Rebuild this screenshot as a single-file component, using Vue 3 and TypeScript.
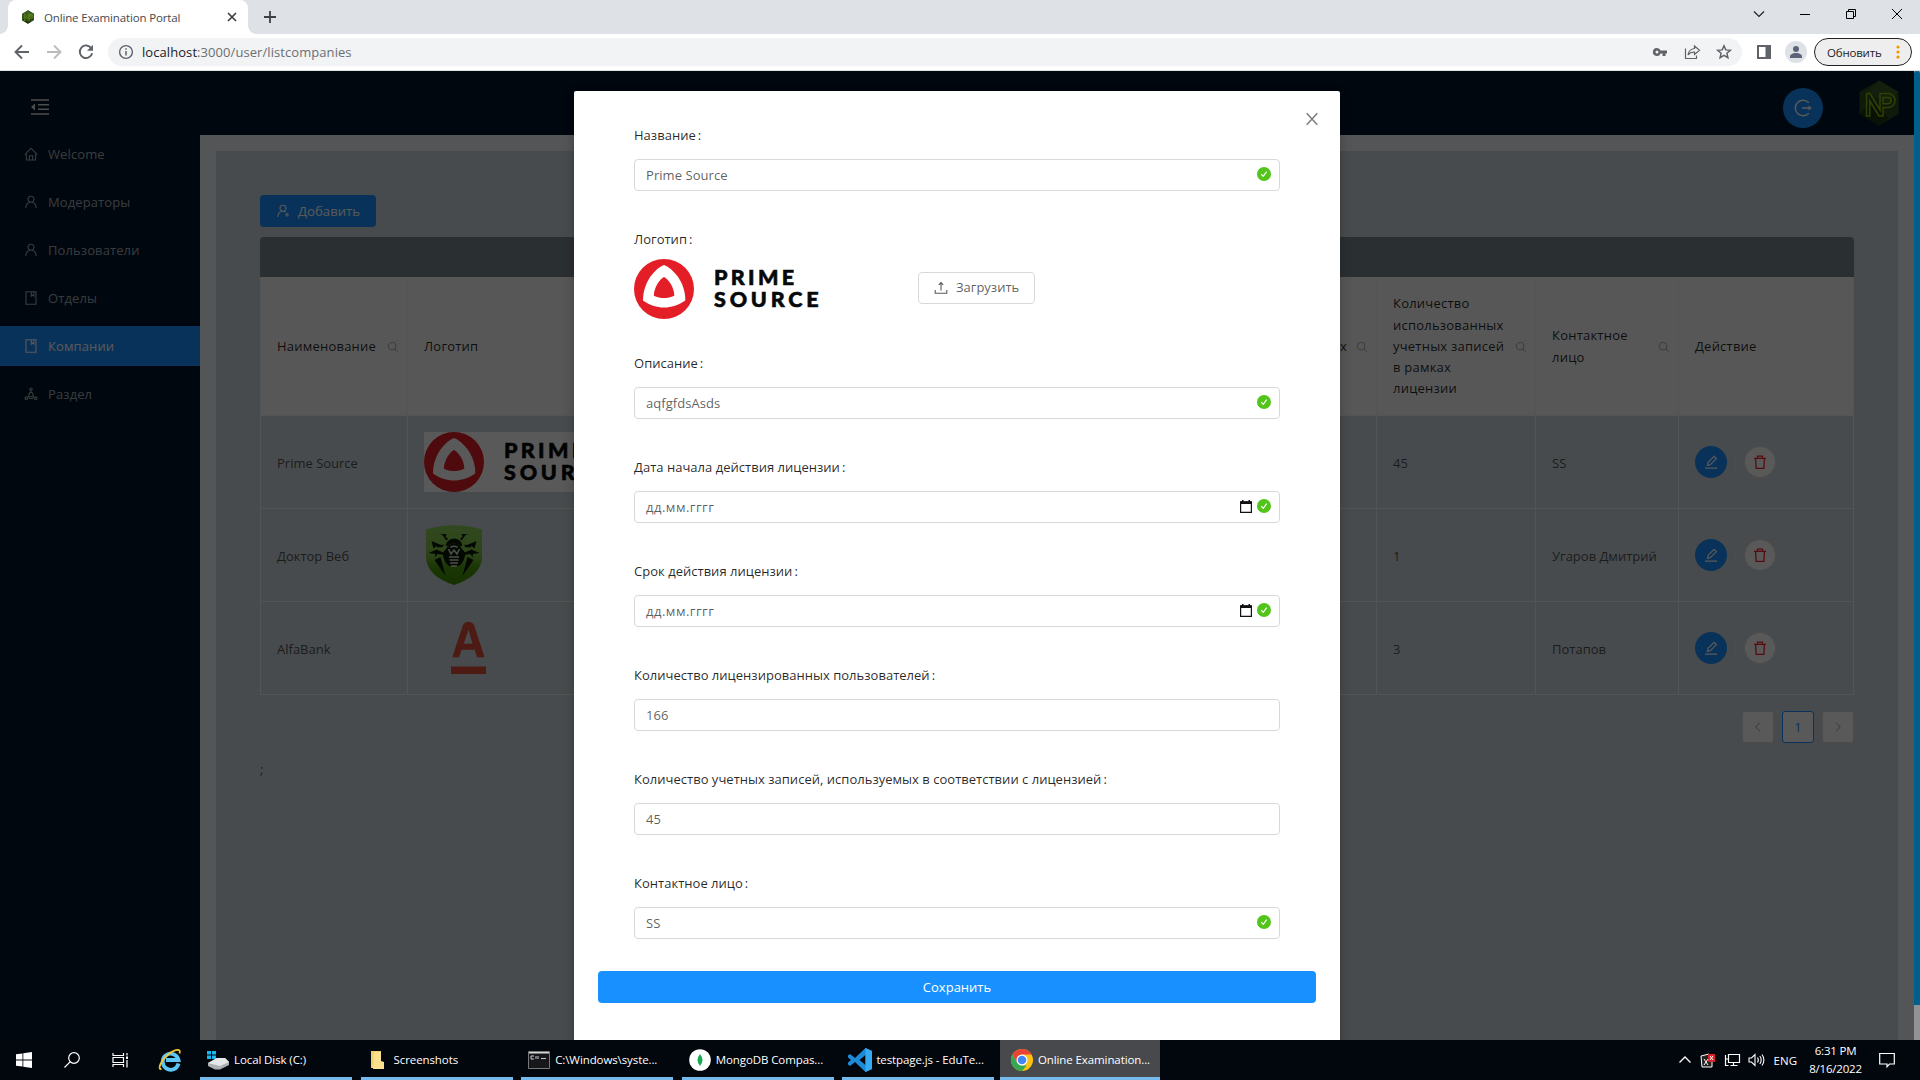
<script setup lang="ts">
import { h } from 'vue'

interface MenuItem { label: string; icon: string; active?: boolean }
interface Company { name: string; logo: string; used: string; contact: string }
interface Field { label: string; value?: string; ok?: boolean; date?: boolean; logo?: boolean }
interface Task { label: string; icon: string; active?: boolean }

const PrimeLogo = () =>
  h('svg', { width: 190, height: 60, viewBox: '0 0 190 60' }, [
    h('circle', { cx: 30, cy: 30, r: 30, fill: '#e31e26' }),
    h('path', { d: 'M30 6C38 9 51.5 22 51.3 41.5C45 46 37 48.5 30 48.5S15 46 9 41.5C9 22 22 9 30 6Z', fill: '#fff' }),
    h('path', { d: 'M30 18C34 20 40.3 28 40.3 36.7C37 38.5 33 39 30 39S23 38.5 19.8 36.7C20 28 26 20 30 18Z', fill: '#e31e26' }),
    h('g', { fill: '#060809', stroke: '#060809', 'stroke-width': 0.6, 'font-family': 'Lato, "Open Sans", sans-serif', 'font-weight': 900, 'font-size': 21.5 }, [
      h('text', { x: 80, y: 26, textLength: 80, lengthAdjust: 'spacing' }, 'PRIME'),
      h('text', { x: 80, y: 48.2, textLength: 104.5, lengthAdjust: 'spacing' }, 'SOURCE'),
    ]),
  ])

const icons: Record<string, string> = {
  home: 'M.8 7.6L7 1.2l6.2 6.4M2.4 7v6h9.2V7M5.4 13V8.8h3.2V13',
  user: 'M7 7.2a3 3 0 1 0 0-6a3 3 0 0 0 0 6M1.8 13c.2-3.3 2.2-5.7 5.2-5.7s5 2.4 5.2 5.7',
  book: 'M2 .8h10v12.4h-10zM7.3 .8v4.3l1.3-1.1l1.3 1.1V.8',
  nodes: 'M7 3.4a1.200 1.200 0 1 0 0-2.400a1.200 1.200 0 0 0 0 2.400M2.300 12.500a1.300 1.300 0 1 0 0-2.600a1.300 1.300 0 0 0 0 2.600M11.700 12.500a1.300 1.300 0 1 0 0-2.600a1.300 1.300 0 0 0 0 2.600M7 3.400v1.800M3.500 10.700l1.500-1M10.500 10.700l-1.500-1M5 9.800C4.700 7.500 5.500 5.500 7 5.200C8.500 5.500 9.300 7.500 9 9.800zM5 11.500h4',
  userAdd: 'M7 7.2a3 3 0 1 0 0-6a3 3 0 0 0 0 6M1.8 13c.2-3.3 2.2-5.7 5.2-5.7c1 0 1.9.3 2.7.8M11 8.8v4M9 10.8h4',
  search: 'M6 10.5a4.5 4.5 0 1 0 0-9a4.5 4.5 0 0 0 0 9M9.3 9.3L13 13.2',
  edit: 'M1 13.2h12M3.5 10.3l.6-2.9l6-6l2.2 2.2l-6 6z',
  trash: 'M1 3.4h12M4.6 3.2V1.2h4.8v2M2.6 3.6l.5 9.7h7.8l.5-9.7',
  upload: 'M1.2 9v3.2h11.6V9M7 9.5V1.5M4.8 3.8L7 1.5l2.2 2.3',
  left: 'M9.3 2L4.3 7l5 5',
  right: 'M4.7 2l5 5l-5 5',
}

const menu: MenuItem[] = [
  { label: 'Welcome', icon: 'home' },
  { label: 'Модераторы', icon: 'user' },
  { label: 'Пользователи', icon: 'user' },
  { label: 'Отделы', icon: 'book' },
  { label: 'Компании', icon: 'book', active: true },
  { label: 'Раздел', icon: 'nodes' },
]

const companies: Company[] = [
  { name: 'Prime Source', logo: 'prime', used: '45', contact: 'SS' },
  { name: 'Доктор Веб', logo: 'drweb', used: '1', contact: 'Угаров Дмитрий' },
  { name: 'AlfaBank', logo: 'alfa', used: '3', contact: 'Потапов' },
]

const usedTitle = ['Количество', 'использованных', 'учетных записей', 'в рамках', 'лицензии']

const fields: Field[] = [
  { label: 'Название', value: 'Prime Source', ok: true },
  { label: 'Логотип', logo: true },
  { label: 'Описание', value: 'aqfgfdsAsds', ok: true },
  { label: 'Дата начала действия лицензии', value: 'дд.мм.гггг', date: true, ok: true },
  { label: 'Срок действия лицензии', value: 'дд.мм.гггг', date: true, ok: true },
  { label: 'Количество лицензированных пользователей', value: '166' },
  { label: 'Количество учетных записей, используемых в соответствии с лицензией', value: '45' },
  { label: 'Контактное лицо', value: 'SS', ok: true },
]

const tasks: Task[] = [
  { label: 'Local Disk (C:)', icon: 'disk' },
  { label: 'Screenshots', icon: 'folder' },
  { label: 'C:\\Windows\\syste...', icon: 'cmd' },
  { label: 'MongoDB Compas...', icon: 'mongo' },
  { label: 'testpage.js - EduTe...', icon: 'code' },
  { label: 'Online Examination...', icon: 'chrome', active: true },
]
</script>

<template>
  <svg class="defs" width="0" height="0">
    <symbol id="np" viewBox="0 0 40 46">
      <path d="M20 0.5L39.5 12V34L20 45.5L.5 34V12Z" fill="#2c4a1e" />
      <path d="M20 .5L39.5 12L28 24L8 12Z" fill="#3a5a28" />
      <path d="M.5 34L12 22L30 38L20 45.5Z" fill="#1d3512" />
      <path d="M7.5 36V13.5h3.5L21 30V13.5h8a6.5 6.5 0 0 1 0 14h-5V36h-4L10.8 21v15zM24 17.5h5a2.8 2.8 0 0 1 0 6.2h-5z" fill="none" stroke="#8cb80c" stroke-width="1.5" />
    </symbol>
  </svg>

  <div class="screen">
    <header class="tabs">
      <div class="tab">
        <svg width="14" height="14"><use href="#np" /></svg>
        <span class="tab-title">Online Examination Portal</span>
        <svg class="tab-x" width="10" height="10" viewBox="0 0 10 10"><path d="M1 1l8 8M9 1L1 9" stroke="#3c4043" stroke-width="1.7" /></svg>
      </div>
      <svg class="plus" width="12" height="12" viewBox="0 0 12 12"><path d="M6 0v12M0 6h12" stroke="#3c4043" stroke-width="1.8" /></svg>
      <div class="win">
        <svg width="12" height="12" viewBox="0 0 12 12"><path d="M1 3.5l5 5l5-5" fill="none" stroke="#222" stroke-width="1.2" /></svg>
        <svg width="12" height="12" viewBox="0 0 12 12"><path d="M1 6.5h10" stroke="#000" /></svg>
        <svg width="12" height="12" viewBox="0 0 12 12"><path d="M1.5 3.5h7v7h-7zM3.5 3.5v-2h7v7h-2" fill="none" stroke="#000" /></svg>
        <svg width="12" height="12" viewBox="0 0 12 12"><path d="M1 1l10 10M11 1L1 11" stroke="#000" /></svg>
      </div>
    </header>

    <div class="toolbar">
      <svg class="nav" width="16" height="16" viewBox="0 0 16 16"><path d="M15 8H2M8 1.5L1.5 8L8 14.5" fill="none" stroke="#5f6368" stroke-width="1.9" /></svg>
      <svg class="nav" width="16" height="16" viewBox="0 0 16 16"><path d="M1 8h13M8 1.5L14.5 8L8 14.5" fill="none" stroke="#babcbe" stroke-width="1.9" /></svg>
      <svg class="nav" width="16" height="16" viewBox="0 0 16 16"><path d="M13.3 4.2A6.3 6.3 0 1 0 14.2 9.2" fill="none" stroke="#5f6368" stroke-width="1.9" /><path d="M15 .8v6H9z" fill="#5f6368" /></svg>
      <div class="omnibox">
        <svg width="16" height="16" viewBox="0 0 16 16"><circle cx="8" cy="8" r="6.4" fill="none" stroke="#5f6368" stroke-width="1.4" /><path d="M8 7v4.5M8 4.3v1.5" stroke="#5f6368" stroke-width="1.5" /></svg>
        <span class="url"><b>localhost</b>:3000/user/listcompanies</span>
        <div class="omni-icons">
          <svg width="16" height="16" viewBox="0 0 16 16"><path d="M5 4a4 4 0 1 0 3.6 5.5H10.5V12h3V9.5H15V6.5H8.6A4 4 0 0 0 5 4zM5 6.5a1.5 1.5 0 1 1 0 3a1.5 1.5 0 0 1 0-3z" fill="#5f6368" fill-rule="evenodd" /></svg>
          <svg width="16" height="16" viewBox="0 0 16 16"><path d="M1.5 4.5v10h11v-3M10.5 2l5 4.3l-5 4.2V8C7.5 8 5.5 9 4 11C4.5 7.5 6.5 5 10.5 4.5z" fill="none" stroke="#5f6368" stroke-width="1.2" /></svg>
          <svg width="16" height="16" viewBox="0 0 16 16"><path d="M8 1.8l1.8 4.1l4.5.4l-3.4 3l1 4.4L8 11.4l-3.9 2.3l1-4.4l-3.4-3l4.5-.4z" fill="none" stroke="#5f6368" stroke-width="1.5" /></svg>
        </div>
      </div>
      <svg class="panel-icon" width="14" height="14" viewBox="0 0 14 14"><path d="M0 0h14v14H0zM2 2v10h6.5V2z" fill="#5f6368" fill-rule="evenodd" /></svg>
      <svg class="avatar" width="22" height="22" viewBox="0 0 22 22"><circle cx="11" cy="11" r="11" fill="#dee1e6" /><circle cx="11" cy="8" r="3" fill="#5a6377" /><path d="M5 17v-1.5c0-2.3 3-3.5 6-3.5s6 1.2 6 3.5V17z" fill="#5a6377" /></svg>
      <div class="update"><span>Обновить</span><svg width="4" height="14" viewBox="0 0 4 14"><g fill="#f29900"><circle cx="2" cy="2" r="1.6" /><circle cx="2" cy="7" r="1.6" /><circle cx="2" cy="12" r="1.6" /></g></svg></div>
    </div>

    <div class="viewport">
      <div class="app">
        <aside class="sider">
          <svg class="fold" width="18" height="16" viewBox="0 0 18 16"><path d="M0 1h18M7 5.7h11M7 10.3h11M0 15h18" stroke="#fff" stroke-opacity=".85" stroke-width="1.6" /><path d="M4 4.5v7L0 8z" fill="#fff" fill-opacity=".85" /></svg>
          <nav class="menu">
            <div v-for="m in menu" :key="m.label" class="menu-item" :class="{ active: m.active }">
              <svg width="14" height="14" viewBox="0 0 14 14"><path :d="icons[m.icon]" class="stroke" /></svg>
              <span>{{ m.label }}</span>
            </div>
          </nav>
        </aside>
        <div class="main">
          <div class="topbar">
            <div class="logout"><svg width="18" height="18" viewBox="0 0 18 18"><path d="M14.8 3.7A7.8 7.8 0 1 0 14.8 14.3M8 9h8" fill="none" stroke="#fff" stroke-width="1.5" /><path d="M14.5 6.5v5L17.8 9z" fill="#fff" /></svg></div>
            <svg width="40" height="46"><use href="#np" /></svg>
          </div>
          <div class="content">
            <div class="add"><svg width="14" height="14" viewBox="0 0 14 14"><path :d="icons.userAdd" class="stroke" /></svg><span>Добавить</span></div>
            <div class="table-title"></div>
            <div class="table">
              <div class="row head">
                <div class="cell c1">Наименование<svg class="find" width="12" height="12" viewBox="0 0 14 14"><path :d="icons.search" class="stroke" /></svg></div>
                <div class="cell c2">Логотип</div>
                <div class="cell c3"><span>х</span><svg class="find" width="12" height="12" viewBox="0 0 14 14"><path :d="icons.search" class="stroke" /></svg></div>
                <div class="cell c4"><div><div v-for="l in usedTitle" :key="l">{{ l }}</div></div><svg class="find" width="12" height="12" viewBox="0 0 14 14"><path :d="icons.search" class="stroke" /></svg></div>
                <div class="cell c5"><div><div>Контактное</div><div>лицо</div></div><svg class="find" width="12" height="12" viewBox="0 0 14 14"><path :d="icons.search" class="stroke" /></svg></div>
                <div class="cell c6">Действие</div>
              </div>
              <div v-for="c in companies" :key="c.name" class="row">
                <div class="cell c1"><span class="txt">{{ c.name }}</span></div>
                <div class="cell c2">
                  <div v-if="c.logo === 'prime'" class="prime-cell"><PrimeLogo /></div>
                  <svg v-else-if="c.logo === 'drweb'" width="60" height="60" viewBox="0 0 60 60">
                    <defs><linearGradient id="dw" x1="0" y1="0" x2="0" y2="1"><stop offset="0" stop-color="#8fd05a" /><stop offset=".5" stop-color="#7cc242" /><stop offset=".72" stop-color="#4a9c0c" /><stop offset="1" stop-color="#3c8c00" /></linearGradient></defs>
                    <path d="M2 4.5Q30-4 58 4.5V33Q57 51 30 60Q3 51 2 33Z" fill="url(#dw)" />
                    <g fill="#0b1808">
                      <path d="M21.5 20Q24 13.5 30 13.5T38.5 20L36.5 21.5Q34 18.5 30 18.5T23.5 21.5Z" />
                      <path d="M22 24l3-4q5-3.5 10 0l3 4l3.5 4q-1 9-6.5 13h-10q-5.500-4-6.500-13z" />
                      <path d="M22.5 15.5L18 9.5L14.5 9L22.5 9L21.5 11.5L24 14zM37.5 15.5L42 9.5L45.5 9L37.5 9L38.5 11.5L36 14z" />
                      <path d="M7.5 16l9.5 4l2.5-.5l-.5 2.5l-5.5.5l-1-1.5l-3 2.5zM52.5 16l-9.5 4l-2.5-.5l.5 2.5l5.5.5l1-1.5l3 2.5z" />
                      <path d="M4.5 28l8-3.5l8 3.5v2l-7-1l-2 3.5l-.5-3.5zM55.5 28l-8-3.5l-8 3.5v2l7-1l2 3.5l.5-3.5z" />
                      <path d="M10.500 35l6-3l5 19zM49.500 35l-6-3l-5 19z" />
                    </g>
                    <path d="M24.5 24l2.500 5l3-4l3 4l2.500-5M26.500 22.500Q30 20 33.500 22.500M25 32h10M25.500 35h9M26 38h8M27 41h6" fill="none" stroke="#d3e6c6" stroke-width="1.6" />
                  </svg>
                  <svg v-else width="60" height="60" viewBox="0 0 60 60"><g fill="#e04a3b"><path d="M28.300 39.300L38.500 8.300Q40 3.700 44.500 3.700T50.500 8.300L60.500 39.300H53L50.700 31.800H37.500L35 39.300ZM39.800 25.800H48.500L44.500 11.800Z" fill-rule="evenodd" /><path d="M27 48.500h35v7.500H27z" /></g></svg>
                </div>
                <div class="cell c3"></div>
                <div class="cell c4"><span class="txt">{{ c.used }}</span></div>
                <div class="cell c5"><span class="txt">{{ c.contact }}</span></div>
                <div class="cell c6 actions">
                  <div class="round blue"><svg width="14" height="14" viewBox="0 0 14 14"><path :d="icons.edit" class="stroke" /></svg></div>
                  <i class="divider"></i>
                  <div class="round red"><svg width="14" height="14" viewBox="0 0 14 14"><path :d="icons.trash" class="stroke" /></svg></div>
                </div>
              </div>
            </div>
            <div class="pager">
              <div class="page"><svg width="12" height="12" viewBox="0 0 14 14"><path :d="icons.left" class="stroke" /></svg></div>
              <div class="page current">1</div>
              <div class="page"><svg width="12" height="12" viewBox="0 0 14 14"><path :d="icons.right" class="stroke" /></svg></div>
            </div>
            <div class="semi">;</div>
          </div>
        </div>
      </div>
      <div class="scrollbar"><div class="thumb"></div></div>

      <div class="mask">
        <section class="modal">
          <svg class="close" width="12" height="12" viewBox="0 0 12 12"><path d="M.7 .3l10.600 11.400M11.300 .3L.7 11.700" stroke="#7c7c7c" stroke-width="1.5" /></svg>
          <div class="form">
            <div v-for="f in fields" :key="f.label" class="field" :class="{ 'logo-field': f.logo }">
              <label>{{ f.label }}<span class="colon">:</span></label>
              <div v-if="f.logo" class="logo-row">
                <PrimeLogo />
                <div class="upload"><svg width="14" height="14" viewBox="0 0 14 14"><path :d="icons.upload" class="stroke" /></svg><span>Загрузить</span></div>
              </div>
              <div v-else class="input">
                <span class="value" :class="{ date: f.date }">{{ f.value }}</span>
                <svg v-if="f.date" class="cal" width="12" height="13" viewBox="0 0 12 13"><path d="M.6 1.800h10.800v10.500H.6z" fill="none" stroke="#111" stroke-width="1.200" /><path d="M.5 1.500h11v2.600H.5zM2 0h1.500v2H2zM8.500 0H10v2H8.500z" fill="#111" /></svg>
                <svg v-if="f.ok" class="ok" width="14" height="14" viewBox="0 0 14 14"><circle cx="7" cy="7" r="7" fill="#52c41a" /><path d="M4.200 7.200l2 2.200l3.500-4.700" fill="none" stroke="#fff" stroke-width="1.200" /></svg>
              </div>
            </div>
          </div>
          <div class="save">Сохранить</div>
        </section>
      </div>
    </div>

    <footer class="taskbar">
      <div class="sys"><svg width="16" height="16" viewBox="0 0 16 16"><path d="M0 2.300L6.500 1.400V7.600H0zM7.300 1.300L16 0V7.600H7.300zM0 8.400h6.500v6.200L0 13.700zM7.300 8.400H16V16l-8.700-1.300z" fill="#fff" /></svg></div>
      <div class="sys"><svg width="16" height="16" viewBox="0 0 16 16"><circle cx="10" cy="6" r="5.300" fill="none" stroke="#fff" stroke-width="1.200" /><path d="M6.300 9.700L.5 15.500" stroke="#fff" stroke-width="1.200" /></svg></div>
      <div class="sys"><svg width="17" height="16" viewBox="0 0 17 16"><path d="M1 1v2.500h10.500V1M1 15v-2.500h10.500V15M1 5.500h10.500v5H1zM15 1v2.500M15 8v7.500" fill="none" stroke="#fff" stroke-width="1.200" /><path d="M14 4.500h2v2.500h-2z" fill="#fff" /></svg></div>
      <div class="sys ie"><svg width="24" height="24" viewBox="0 0 24 24"><path d="M20.500 15.500A8 8 0 1 1 20.500 12H8" fill="none" stroke="#5cc6f4" stroke-width="3.800" /><path d="M3.500 21C-1 22 3 12 10 6.500S23.500 0 21.500 5.500" fill="none" stroke="#f5c531" stroke-width="1.800" /></svg></div>
      <div v-for="t in tasks" :key="t.label" class="task" :class="[t.icon, { current: t.active }]">
        <div class="task-icon">
          <svg v-if="t.icon === 'disk'" width="22" height="20" viewBox="0 0 22 20"><path d="M0 1h4v3.500H0zM5 1h4v3.500H5zM0 5.500h4V9H0zM5 5.500h4V9H5z" fill="#19b5ee" /><path d="M1 13l9-5h8l4 4v3l-9 4.500H8L1 16z" fill="#aeb1b4" /><path d="M1 13l9-5h8l4 4l-9 4z" fill="#e4e6e8" /></svg>
          <svg v-else-if="t.icon === 'folder'" width="16" height="20" viewBox="0 0 16 20"><path d="M1 1h10v17H1z" fill="#f3cf71" /><path d="M4 2h7v9l3 1v7H3z" fill="#fbe08d" /></svg>
          <svg v-else-if="t.icon === 'cmd'" width="22" height="18" viewBox="0 0 22 18"><path d="M.5 .5h21v17H.5z" fill="#15171a" stroke="#777" /><path d="M1 1h20v1.500H1z" fill="#d4d6d8" /><path d="M3 5h3M3 8h3M3 5v3M8 5v3M10 5v3M13 7.500h5" stroke="#ddd" stroke-width=".9" /></svg>
          <svg v-else-if="t.icon === 'mongo'" width="22" height="22" viewBox="0 0 22 22"><circle cx="11" cy="11" r="10.800" fill="#fff" /><path d="M11 5Q16 11 11 17Q6 11 11 5z" fill="#13aa52" /></svg>
          <svg v-else-if="t.icon === 'code'" width="24" height="24" viewBox="0 0 24 24"><path d="M17.500 0L24 3v18l-6.500 3L7 14l-5 4l-2-1.500v-2L3 12L0 9.500v-2L2 6l5 4zM17.500 7L11.500 12l6 5z" fill="#1c8ad6" fill-rule="evenodd" /><path d="M17.500 0L24 3v18l-6.500 3z" fill="#35aaf2" /></svg>
          <svg v-else width="22" height="22" viewBox="0 0 22 22"><circle cx="11" cy="11" r="11" fill="#fbc116" /><path d="M1.470 5.500A11 11 0 0 1 20.530 5.500H11L6.240 13.750Z" fill="#ea4335" /><path d="M1.470 5.500L6.240 13.750L11 16.500H15.760L11 22A11 11 0 0 1 1.470 5.500Z" fill="#34a853" /><circle cx="11" cy="11" r="5.500" fill="#fff" /><circle cx="11" cy="11" r="4.300" fill="#4285f4" /></svg>
        </div>
        <span>{{ t.label }}</span>
      </div>
      <div class="tray">
        <svg width="14" height="14" viewBox="0 0 14 14"><path d="M1.500 9.500L7 4l5.500 5.500" fill="none" stroke="#fff" stroke-width="1.300" /></svg>
        <svg width="17" height="17" viewBox="0 0 17 17"><path d="M2 4l8-2l3 4v9H3z" fill="#222" stroke="#fff" /><path d="M9 2h7v8H9z" fill="#d8232a" /><path d="M11 4l3 4M14 4l-3 4M5 7l4 6M9 7l-4 6" stroke="#fff" /></svg>
        <svg width="17" height="16" viewBox="0 0 17 16"><path d="M4.500 2.500h11v8h-11zM9.500 10.500v3M6.500 13.500h7M1.500 3v4h3M1.500 7v6.500h3" fill="none" stroke="#fff" stroke-width="1.200" /></svg>
        <svg width="17" height="16" viewBox="0 0 17 16"><path d="M1 6h2.500L7 2.500v11L3.500 10H1zM9.500 5.500q1.700 2.500 0 5M11.800 4q2.800 4 0 8M14 2.500q3.800 5.500 0 11" fill="none" stroke="#fff" stroke-width="1.100" /></svg>
        <span class="lang">ENG</span>
        <div class="clock"><div>6:31 PM</div><div>8/16/2022</div></div>
        <svg width="16" height="16" viewBox="0 0 16 16"><path d="M.7 1.500h14.600v10.500H10.500L8 14.800V12H.7z" fill="none" stroke="#fff" stroke-width="1.200" /></svg>
      </div>
    </footer>
  </div>
</template>

<style>
body { margin: 0; overflow: hidden; }
</style>

<style scoped>
* { box-sizing: border-box; }
svg { flex: none; display: block; overflow: visible; }
.defs { position: absolute; }
.stroke { fill: none; stroke: currentColor; stroke-width: 1.1; }
.screen { width: 1920px; height: 1080px; display: flex; flex-direction: column; overflow: hidden; font: 13px/21px "Open Sans", "Noto Sans", sans-serif; color: rgba(0, 0, 0, .65); }
.tabs { height: 34px; background: #dee1e6; display: flex; align-items: center; padding-left: 8px; flex: none; }
.tab { position: relative; width: 240px; height: 34px; background: #fff; border-radius: 8px 8px 0 0; display: flex; align-items: center; padding: 0 11px 0 13px; color: #45494d; font-size: 11.5px; }
.tab::before, .tab::after { content: ""; position: absolute; bottom: 0; width: 8px; height: 8px; }
.tab::before { left: -8px; background: radial-gradient(circle at 0 0, #dee1e6 7.5px, #fff 8px); }
.tab::after { right: -8px; background: radial-gradient(circle at 100% 0, #dee1e6 7.5px, #fff 8px); }
.tab-title { margin-left: 9px; flex: 1; white-space: nowrap; letter-spacing: -.15px; }
.plus { margin-left: 16px; }
.win { margin-left: auto; display: flex; gap: 34px; margin-right: 17px; margin-top: -6px; }
.toolbar { height: 37px; flex: none; background: #fff; border-bottom: 1px solid #dfe3df; display: flex; align-items: center; padding: 0 8px 0 14px; }
.nav { margin-right: 16px; }
.omnibox { width: 1634px; margin-left: -2px; height: 28px; border-radius: 14px; background: #f1f3f4; display: flex; align-items: center; padding: 0 10px; color: #6b6f73; }
.url { margin-left: 8px; font-size: 13px; letter-spacing: .07px; }
.url b { font-weight: 400; color: #202124; }
.omni-icons { margin-left: auto; display: flex; gap: 16px; }
.panel-icon { margin-left: 15px; }
.avatar { margin-left: 14px; }
.update { margin-left: 7px; width: 98px; height: 28px; border: 1px solid #222; border-radius: 14px; background: #eee; display: flex; align-items: center; justify-content: space-between; padding: 0 11px 0 12px; font-size: 11.5px; letter-spacing: -.2px; color: #222; }
.viewport { position: relative; flex: none; height: 969px; display: flex; overflow: hidden; }
.app { width: 1914px; display: flex; }
.scrollbar { width: 6px; background: #8f9396; }
.thumb { height: 934px; background: #00608b; border-radius: 3px 3px 0 0; }
.sider { width: 200px; background: #001529; }
.fold { margin: 28px 0 0 31px; }
.menu { margin-top: 19px; display: flex; flex-direction: column; gap: 8px; color: rgba(255, 255, 255, .65); letter-spacing: .1px; }
.menu-item { height: 40px; display: flex; align-items: center; padding-left: 24px; gap: 10px; }
.menu-item.active { background: #1890ff; color: #fff; }
.main { flex: 1; background: #f0f2f5; }
.topbar { height: 64px; background: #001529; display: flex; justify-content: flex-end; padding: 9px 15px 0 0; gap: 36px; }
.logout { width: 40px; height: 40px; margin-top: 8px; border-radius: 50%; background: #1890ff; display: flex; align-items: center; justify-content: center; }
.content { margin: 16px 16px 0; height: 889px; background: #ced6dc; padding: 44px; }
.add { width: 116px; height: 32px; border-radius: 4px; background: #1890ff; color: #fff; display: flex; align-items: center; padding-left: 16px; gap: 8px; font-size: 13.2px; }
.table-title { margin-top: 10px; height: 40px; border-radius: 4px 4px 0 0; background: #78868f; }
.table { border-left: 1px solid #f0f0f0; }
.row { display: flex; height: 93px; border-bottom: 1px solid #f0f0f0; }
.row.head { height: 139px; background: #fafafa; color: rgba(0, 0, 0, .85); font-weight: 500; }
.cell { padding-left: 16px; border-right: 1px solid #f0f0f0; display: flex; align-items: center; white-space: nowrap; flex: none; }
.txt { padding-top: 2px; }
.head .cell { justify-content: space-between; padding-right: 8px; letter-spacing: .22px; padding-top: 1px; line-height: 21.2px; }
.c1 { width: 147px; } .c2 { width: 810px; } .c3 { width: 159px; } .c4 { width: 159px; } .c5 { width: 143px; } .c6 { width: 175px; }
.head .c3 { justify-content: flex-end; gap: 9px; }
.find { color: #a5a5a5; }
.prime-cell { background: #fff; }
.round { width: 32px; height: 32px; border-radius: 50%; display: flex; align-items: center; justify-content: center; }
.round .stroke { stroke-width: 1.3; }
.blue { background: #1890ff; color: #fff; }
.red { background: #fff; border: 1px solid #d9d9d9; color: #f5222d; }
.divider { width: 1px; height: 13px; background: #dcdcdc; margin: 0 8px; }
.pager { display: flex; justify-content: flex-end; gap: 8px; margin-top: 16px; }
.page { width: 32px; height: 32px; border: 1px solid #d9d9d9; border-radius: 3px; background: #fff; color: #999; display: flex; align-items: center; justify-content: center; }
.current.page { border-color: #1890ff; color: #1890ff; }
.semi { margin-top: 16px; }
.mask { position: absolute; top: 0; left: 0; width: 1914px; height: 969px; background: rgba(0, 0, 0, .65); display: flex; justify-content: center; padding-top: 20px; }
.modal { position: relative; width: 766px; height: 1000px; background: #fff; border-radius: 2px; padding: 28px 24px; box-shadow: 0 4px 12px rgba(0, 0, 0, .25); }
.close { position: absolute; right: 22px; top: 22px; }
.form { padding: 0 36px; }
.field { height: 104px; }
.logo-field { height: 124px; }
label { display: block; height: 32px; line-height: 32px; color: rgba(0, 0, 0, .85); white-space: nowrap; letter-spacing: .02px; }
.colon { margin-left: 2px; }
.input { margin-top: 8px; height: 32px; border: 1px solid #d9d9d9; border-radius: 4px; padding: 0 8px 0 11px; display: flex; align-items: center; }
.value { flex: 1; letter-spacing: .06px; }
.value.date { letter-spacing: .5px; }
.ok { margin-top: -3px; }
.cal { margin-right: 5px; margin-top: -2px; }
.logo-row { margin-top: 4px; height: 60px; display: flex; align-items: center; }
.upload { margin: -3px 0 0 94px; width: 117px; height: 32px; border: 1px solid #d9d9d9; border-radius: 4px; display: flex; align-items: center; padding-left: 15px; gap: 8px; }
.save { margin-top: 0; height: 32px; border-radius: 4px; background: #1890ff; color: #fff; display: flex; align-items: center; justify-content: center; }
.taskbar { height: 40px; background: #02060d; display: flex; align-items: stretch; color: #fff; font-size: 11.5px; flex: none; }
.sys { width: 48px; display: flex; align-items: center; justify-content: center; }
.ie { width: 52px; margin-right: 4px; }
.task { width: 152px; margin-right: 8.6px; border-bottom: 3px solid #76b9ed; display: flex; align-items: center; padding: 2px 0 0 6px; white-space: nowrap; letter-spacing: -.1px; flex: none; }
.task-icon { width: 24px; margin-right: 4px; display: flex; justify-content: center; }
.folder .task-icon { margin-right: 3px; justify-content: flex-start; padding-left: 3px; }
.task.current { width: 160px; margin: 0 0 0 -3px; padding-left: 10px; background: #47494d; }
.tray { margin-left: auto; display: flex; align-items: center; padding-right: 25px; gap: 7.5px; }
.lang { margin-left: 1px; }
.clock { width: 62px; text-align: center; line-height: 18px; font-size: 11.5px; letter-spacing: -.2px; white-space: nowrap; margin-right: 5px; }
</style>
